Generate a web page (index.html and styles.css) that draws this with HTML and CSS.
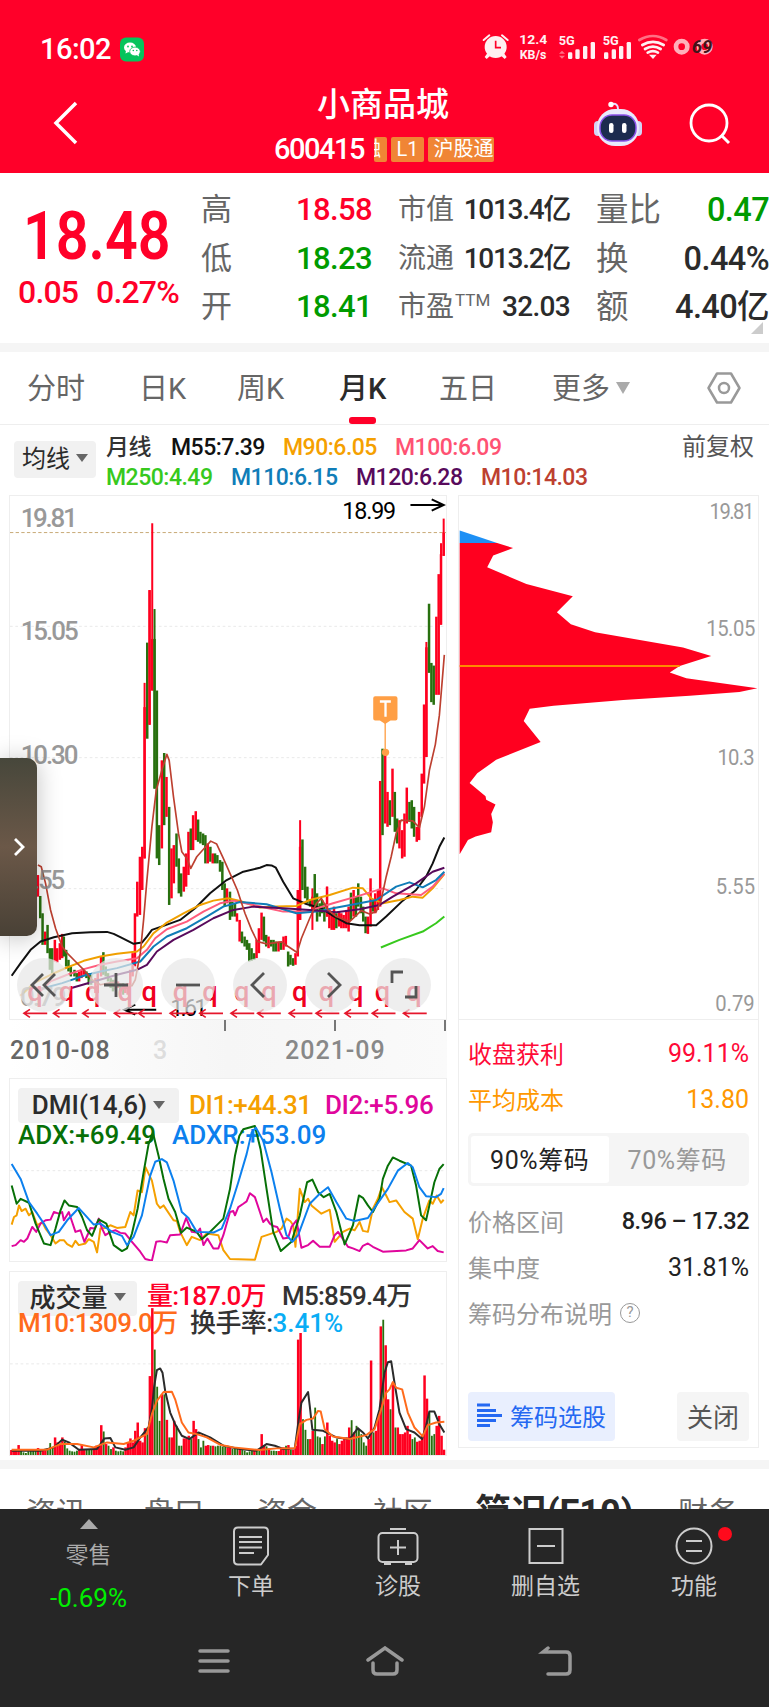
FILE: index.html
```html
<!DOCTYPE html>
<html lang="zh-CN">
<head>
  <meta charset="UTF-8">
  <title>小商品城 600415</title>
  <link rel="stylesheet" href="styles.css">
</head>
<body>
  <header class="header">
    <div class="status-bar">
      <span class="clock">16:02</span>
      <svg class="wechat" viewBox="0 0 24 24">
        <rect width="24" height="24" rx="6" fill="#05c45c"/>
        <ellipse cx="10" cy="10" rx="6" ry="5" fill="#fff"/>
        <path d="M6 13l-.5 3 3-1.500z" fill="#fff"/>
        <ellipse cx="15" cy="14" rx="5.300" ry="4.400" fill="#fff" stroke="#05c45c" stroke-width=".8"/>
        <path d="M16 17l3 2-.5-3z" fill="#fff"/>
        <g fill="#05c45c"><circle cx="8" cy="9" r=".9"/><circle cx="12" cy="9" r=".9"/><circle cx="13.300" cy="13" r=".8"/><circle cx="16.800" cy="13" r=".8"/></g>
      </svg>
      <svg class="status-icons" viewBox="0 0 780 150">
        <g fill="#fff0f2">
          <circle cx="77" cy="69" r="33"/>
          <path d="M52 88l8 8-10 9-6-6zM102 88l-8 8 10 9 6-6z"/>
          <path d="M41 48l17-14M113 48L96 34" stroke="#fff0f2" stroke-width="6" stroke-linecap="round"/>
        </g>
        <path d="M77 50v21h16" fill="none" stroke="#ff0029" stroke-width="5"/>
        <g class="status-text">
          <text x="148" y="59" textLength="84" lengthAdjust="spacingAndGlyphs" font-size="41">12.4</text>
          <text x="149" y="105" textLength="80" lengthAdjust="spacingAndGlyphs" font-size="38">KB/s</text>
          <text x="266" y="62" textLength="48" lengthAdjust="spacingAndGlyphs" font-size="40">5G</text>
          <text x="398" y="62" textLength="48" lengthAdjust="spacingAndGlyphs" font-size="40">5G</text>
        </g>
        <g fill="#fff0f2">
          <rect x="294" y="85" width="13" height="20" rx="4"/><rect x="316" y="76" width="13" height="29" rx="4"/><rect x="339" y="66" width="13" height="39" rx="4"/><rect x="362" y="54" width="13" height="51" rx="4"/>
          <rect x="402" y="85" width="13" height="20" rx="4"/><rect x="425" y="76" width="13" height="29" rx="4"/><rect x="447" y="66" width="13" height="39" rx="4"/><rect x="470" y="54" width="13" height="51" rx="4"/>
          <path d="M537 92h23l-11 13z"/>
        </g>
        <path d="M267 89l9-9 9 9zM267 95l9 9 9-9z" fill="#ff6f84"/>
        <g fill="none" stroke="#fff0f2" stroke-width="8" stroke-linecap="round">
          <path d="M508 48q41-24 81 0" stroke="#ff6f84"/>
          <path d="M517 63q32-19 64 0M525 75q24-14 47 0M533 86q16-9 31 0"/>
        </g>
        <circle cx="635" cy="68" r="17" fill="none" stroke="#ffb0ba" stroke-width="14"/>
        <circle cx="704" cy="68" r="17" fill="none" stroke="#ffb0ba" stroke-width="14"/>
        <text class="battery" x="665" y="88" font-size="54" textLength="62" lengthAdjust="spacingAndGlyphs">69</text>
      </svg>
    </div>

    <div class="title-bar">
      <svg class="back" viewBox="0 0 26 44"><path d="M23 2L3 22l20 20" fill="none" stroke="#fff" stroke-width="3.500"/></svg>
      <div class="title">
        <h1>小商品城</h1>
        <div class="subtitle">
          <span class="code">600415</span>
          <span class="tag tag-cut"><span>融</span></span>
          <span class="tag tag-level">L1</span>
          <span class="tag tag-market">沪股通</span>
        </div>
      </div>
      <svg class="robot" viewBox="0 0 50 46">
        <path d="M25 8q0-6-6-5" fill="none" stroke="#ead9ff" stroke-width="2"/>
        <circle cx="18" cy="3.500" r="2.700" fill="#fff"/>
        <rect x="1" y="20" width="8" height="15" rx="4" fill="#d2d4f5"/><rect x="41" y="20" width="8" height="15" rx="4" fill="#d2d4f5"/>
        <rect x="4" y="8" width="42" height="37" rx="18" fill="#e9e9fb"/>
        <rect x="7" y="14" width="36" height="26" rx="12" fill="#1c2b4e" stroke="#8a52e8" stroke-width="1.500"/>
        <rect x="16" y="22" width="4.500" height="10" rx="2.200" fill="#fff"/><rect x="29" y="22" width="4.500" height="10" rx="2.200" fill="#fff"/>
      </svg>
      <svg class="search" viewBox="0 0 42 42"><circle cx="20" cy="20" r="18" fill="none" stroke="#fff" stroke-width="2.800"/><path d="M32 32l8 8" stroke="#fff" stroke-width="3"/></svg>
    </div>
  </header>

  <section class="quote">
    <div class="price">
      <strong>18.48</strong>
      <div class="change"><span>0.05</span><span>0.27%</span></div>
    </div>
    <dl class="facts facts-day">
      <div><dt>高</dt><dd class="up">18.58</dd></div>
      <div><dt>低</dt><dd class="down">18.23</dd></div>
      <div><dt>开</dt><dd class="down">18.41</dd></div>
    </dl>
    <dl class="facts facts-cap">
      <div><dt>市值</dt><dd>1013.4亿</dd></div>
      <div><dt>流通</dt><dd>1013.2亿</dd></div>
      <div><dt>市盈<sup>TTM</sup></dt><dd class="pe">32.03</dd></div>
    </dl>
    <dl class="facts facts-vol">
      <div><dt>量比</dt><dd class="down">0.47</dd></div>
      <div><dt>换</dt><dd>0.44%</dd></div>
      <div><dt>额</dt><dd>4.40亿</dd></div>
    </dl>
    <i class="corner"></i>
  </section>

  <nav class="periods">
    <a>分时</a>
    <a>日K</a>
    <a>周K</a>
    <a class="active">月K</a>
    <a>五日</a>
    <a>更多<i class="caret"></i></a>
    <svg class="settings" viewBox="0 0 34 32"><path d="M10 1.500h14L32.500 16 24 30.500H10L1.500 16z" fill="none" stroke="#999" stroke-width="2.500" stroke-linejoin="round"/><circle cx="17" cy="16" r="5" fill="none" stroke="#999" stroke-width="2.500"/></svg>
  </nav>

  <div class="ma-legend">
    <button class="picker">均线<i class="caret"></i></button>
    <div class="ma-values">
      <div class="ma-row ma-row-top">
        <span class="c-text">月线</span><span class="c-m55">M55:7.39</span><span class="c-m90">M90:6.05</span><span class="c-m100">M100:6.09</span>
      </div>
      <div class="ma-row ma-row-bottom">
        <span class="c-m250">M250:4.49</span><span class="c-m110">M110:6.15</span><span class="c-m120">M120:6.28</span><span class="c-m10">M10:14.03</span>
      </div>
    </div>
    <span class="adjust">前复权</span>
  </div>

  <main class="board">
    <div class="charts">
      <div class="kline">
        <svg viewBox="28 -735 1312 1573" preserveAspectRatio="none">
          <g fill="none" stroke="#e9e9e9" stroke-width="3" stroke-dasharray="8 8"><path d="M28-343H1340M28 52H1340M28 446H1340"/></g>
          <path d="M28-625H1340" stroke="#c8aa76" stroke-width="3" stroke-dasharray="10 7"/>
          <g id="candles"></g>
          <g class="lines">
            <polyline class="s-m55" points="33,708 60,670 90,630 120,605 160,592 215,580 270,577 320,576 340,582 360,592 400,612 425,608 440,590 455,570 490,558 540,540 585,505 630,460 680,420 730,395 780,383 800,375 815,376 828,383 850,425 880,475 920,492 965,505 1000,528 1040,550 1080,556 1130,556 1160,530 1210,482 1250,450 1280,410 1300,370 1320,320 1335,292"/>
            <polyline class="s-m90" points="60,768 100,730 150,705 200,683 250,663 300,650 350,642 410,635 430,620 460,580 500,548 550,520 600,495 640,482 685,475 720,483 780,503 830,500 890,498 930,480 990,465 1060,443 1090,445 1115,475 1150,490 1200,480 1240,470 1270,473 1300,445 1335,402"/>
            <polyline class="s-m100" points="115,758 150,725 200,705 250,688 300,675 350,665 410,655 440,630 465,595 500,568 560,545 610,515 660,490 700,482 760,495 850,515 920,515 1000,490 1070,470 1150,445 1190,460 1265,465 1300,440 1335,400"/>
            <polyline class="s-m110" points="130,745 185,730 250,708 300,695 350,685 420,665 460,620 500,590 560,565 620,530 670,500 720,486 800,493 890,520 950,515 1000,505 1080,490 1130,480 1190,440 1230,427 1270,442 1310,420 1335,395"/>
            <polyline class="s-m120" points="213,745 270,728 350,705 410,690 440,675 470,635 520,600 580,570 640,535 700,510 760,500 850,505 930,510 1010,517 1080,508 1140,495 1180,470 1250,430 1300,395 1335,383"/>
            <polyline class="s-m250" points="1144,623 1200,600 1270,575 1310,550 1335,530"/>
            <polyline class="s-m10" points="112,375 122,380 135,430 150,510 165,565 185,620 200,640 225,665 250,690 275,720 300,735 335,728 370,735 395,738 405,720 420,640 430,540 440,420 455,260 468,150 485,90 500,42 507,60 520,170 535,280 545,335 560,355 572,385 590,350 612,325 632,303 650,312 670,355 690,400 712,450 735,520 755,570 772,605 800,612 845,606 865,620 892,638 905,595 930,535 950,490 965,475 985,510 1010,530 1050,545 1085,512 1110,522 1130,515 1145,480 1160,410 1175,350 1190,280 1205,240 1240,242 1260,262 1275,200 1290,90 1308,12 1320,-75 1335,-257"/>
          </g>
          <g class="axis">
            <text x="60" y="-643" textLength="172">19.81</text>
            <text x="60" y="-303" textLength="175">15.05</text>
            <text x="60" y="70" textLength="174">10.30</text>
            <text x="60" y="446" textLength="134">5.55</text>
            <text x="58" y="800" textLength="140">0.79</text>
          </g>
          <g class="mark">
            <text x="1028" y="-665" textLength="162">18.99</text>
            <path d="M1233-708H1333M1297-725l36 17-36 17"/>
            <text x="510" y="830" textLength="112">1.61</text>
            <path d="M468 810H372M405 795l-33 15 33 15"/>
          </g>
          <g fill="#ff9f45">
            <path d="M1157-60V30" stroke="#ff9f45" stroke-width="4"/>
            <circle cx="1158" cy="36" r="11"/>
            <path d="M1127-133h61q6 0 6 6v61q0 6-6 6h-15l-16 11-16-11h-14q-6 0-6-6v-61q0-6 6-6z"/>
          </g>
          <path d="M1141-117h33M1158-117v46" stroke="#fff" stroke-width="7"/>
          <g id="signals" class="signals"></g>
        </svg>
        <div class="tools">
          <button><svg viewBox="0 0 54 54"><path d="M26 16L15 27l11 11M38 16L27 27l11 11"/></svg></button>
          <button><svg viewBox="0 0 54 54"><path d="M15 27h24M27 15v24"/></svg></button>
          <button><svg viewBox="0 0 54 54"><path d="M15 27h24"/></svg></button>
          <button><svg viewBox="0 0 54 54"><path d="M31 15L19 27l12 12"/></svg></button>
          <button><svg viewBox="0 0 54 54"><path d="M23 15l12 12-12 12"/></svg></button>
          <button><svg viewBox="0 0 54 54"><path d="M15 25V14h11M39 28v11H28"/></svg></button>
        </div>
      </div>

      <div class="dates">
        <div class="ticks"><i></i><i></i><i></i></div>
        <div class="date-row"><span>2010-08</span><span class="faded">3</span><span class="mid">2021-09</span></div>
      </div>

      <div class="indicator dmi">
        <div class="ind-row">
          <button class="picker">DMI(14,6)<i class="caret"></i></button>
          <span class="c-di1">DI1:+44.31</span><span class="c-di2">DI2:+5.96</span>
        </div>
        <div class="ind-row second"><span class="c-adx">ADX:+69.49</span><span class="c-adxr">ADXR:+53.09</span></div>
        <svg class="overlay" viewBox="28 38 1312 550" preserveAspectRatio="none">
          <path d="M28 315H1340" stroke="#e9e9e9" stroke-width="3" stroke-dasharray="8 8"/>
          <g class="lines">
            <polyline class="s-di1" points="33,478 40,455 48,450 55,420 63,437 75,430 85,450 95,440 110,480 125,470 135,490 150,510 165,535 178,525 190,525 200,537 215,545 225,527 235,540 255,535 265,522 280,530 290,562 300,490 315,488 330,480 350,488 375,485 390,440 400,450 412,375 425,380 436,305 455,345 470,415 480,428 490,420 520,465 530,467 540,500 560,540 575,515 600,525 620,505 655,510 670,555 690,582 765,584 785,515 830,500 845,490 860,460 872,468 880,480 887,545 900,370 915,410 925,400 935,420 965,445 990,433 1005,530 1020,512 1030,500 1050,490 1065,495 1080,470 1090,497 1105,500 1120,430 1135,400 1147,365 1160,390 1170,410 1190,405 1215,440 1240,460 1255,522 1270,460 1290,405 1300,415 1312,390 1325,412 1333,403"/>
            <polyline class="s-di2" points="33,543 45,540 60,525 70,530 80,520 95,485 107,500 120,475 135,465 150,463 160,440 175,445 185,440 190,465 205,440 215,470 225,500 240,495 252,530 262,508 270,488 283,490 295,460 305,490 315,510 330,500 345,495 360,503 375,505 395,530 420,560 435,582 455,587 468,530 480,528 500,532 510,510 540,508 550,480 558,458 575,500 590,502 600,490 610,540 622,520 640,550 655,550 670,510 690,440 700,437 705,450 715,425 730,415 740,408 750,383 765,395 780,440 790,470 800,460 810,475 820,482 832,485 850,520 865,518 875,485 890,465 905,548 925,540 940,527 960,545 990,545 1005,510 1015,500 1030,522 1045,545 1060,550 1080,558 1090,542 1105,535 1120,545 1150,560 1220,556 1240,550 1260,525 1285,550 1300,543 1315,558 1333,562"/>
            <polyline class="s-adx" points="33,360 48,415 60,400 85,412 105,475 130,535 150,540 165,490 180,435 192,405 205,420 230,425 245,455 260,495 275,512 295,462 318,475 340,540 365,558 380,550 395,505 412,430 430,320 445,235 458,200 475,270 490,340 505,400 525,440 543,503 560,487 590,500 605,522 625,505 655,475 670,460 690,370 705,270 718,210 730,190 765,180 782,250 800,370 820,500 843,558 875,530 900,450 922,350 938,342 955,380 972,395 990,385 1010,440 1035,538 1060,480 1078,390 1090,397 1105,420 1120,440 1140,400 1150,340 1165,300 1180,275 1200,285 1235,300 1250,360 1265,450 1280,465 1290,420 1305,350 1320,310 1333,295"/>
            <polyline class="s-adxr" points="33,295 60,340 85,410 110,445 130,475 150,510 175,500 200,465 235,428 255,450 280,478 300,475 335,500 365,512 380,540 400,515 425,450 450,330 465,288 485,280 500,290 520,345 545,440 565,458 590,500 640,502 665,490 690,430 715,350 740,265 755,200 768,185 790,225 815,320 840,430 860,510 878,530 895,510 930,415 960,385 985,365 1010,410 1040,460 1065,467 1105,458 1130,420 1165,370 1195,315 1225,292 1240,305 1260,365 1280,392 1310,395 1325,385 1333,368"/>
          </g>
        </svg>
      </div>

      <div class="indicator volume">
        <div class="ind-row">
          <button class="picker">成交量<i class="caret"></i></button>
          <span class="c-up">量:187.0万</span><span class="c-text">M5:859.4万</span>
        </div>
        <div class="ind-row second"><span class="c-v10">M10:1309.0万</span><span class="c-text">换手率:<b>3.41%</b></span></div>
        <svg class="overlay" viewBox="28 16 1312 552" preserveAspectRatio="none">
          <path d="M28 293H1340" stroke="#e9e9e9" stroke-width="3" stroke-dasharray="8 8"/>
          <g id="bars"></g>
          <g class="lines">
            <polyline class="s-v5" points="33,555 120,555 160,545 185,522 205,530 235,552 290,550 312,518 330,517 345,545 375,552 400,545 420,515 445,485 455,430 462,360 470,312 480,307 487,320 495,375 510,440 525,475 545,510 568,520 595,500 630,515 670,540 720,550 770,555 800,535 825,540 850,550 885,548 897,460 905,410 925,378 930,420 938,492 970,495 1010,515 1050,520 1075,487 1090,500 1105,518 1125,485 1140,430 1155,320 1165,288 1175,285 1185,350 1200,440 1220,490 1245,500 1268,520 1280,480 1290,437 1305,437 1320,475 1335,500"/>
            <polyline class="s-v10" points="33,552 140,552 180,535 230,535 280,545 320,530 370,535 400,525 440,505 455,445 470,405 490,378 515,377 525,400 545,470 565,500 590,505 620,515 660,537 700,545 780,553 830,548 885,548 900,475 920,462 940,458 955,435 963,437 975,490 1000,512 1050,520 1100,508 1125,490 1145,430 1160,380 1170,370 1180,348 1190,365 1208,370 1225,440 1245,485 1270,512 1285,478 1310,470 1335,468"/>
          </g>
        </svg>
      </div>
    </div>

    <aside class="chips">
      <svg class="chips-chart" viewBox="25 40 901 1467" preserveAspectRatio="none">
        <path d="M27 137L140 172H27z" fill="#1e90f5"/>
        <path d="M27 172H140L188 186 128 207 110 240 228 287 368 321 320 366 362 400 435 422 700 465 785 489 690 517 660 535 710 551 924 579 870 590 720 600 520 612 310 628 238 637 220 671 271 730 137 780 80 818 57 845 105 882 107 892 135 905 122 932 127 955 122 983 75 995 52 1005 27 1045z" fill="#ff001f"/>
        <path d="M27 517H690" stroke="#ff8a00" stroke-width="6"/>
        <g class="chips-axis">
          <text x="780" y="104" textLength="135">19.81</text>
          <text x="770" y="433" textLength="148">15.05</text>
          <text x="804" y="795" textLength="112">10.3</text>
          <text x="799" y="1157" textLength="118">5.55</text>
          <text x="797" y="1484" textLength="119">0.79</text>
        </g>
      </svg>
      <div class="chips-body">
        <div class="stat c-profit"><span>收盘获利</span><b>99.11%</b></div>
        <div class="stat c-cost"><span>平均成本</span><b>13.80</b></div>
        <div class="toggle"><button class="on">90%筹码</button><button>70%筹码</button></div>
        <div class="stat"><span>价格区间</span><b class="narrow">8.96 – 17.32</b></div>
        <div class="stat"><span>集中度</span><b>31.81%</b></div>
        <div class="stat"><span>筹码分布说明<i class="help">?</i></span></div>
        <div class="actions">
          <button class="pick"><svg viewBox="0 0 25 25"><path d="M0 2h13M0 7.500h19M0 12.500h25M0 17.500h19M0 22.500h13" stroke="#2468f2" stroke-width="3"/></svg>筹码选股</button>
          <button class="close">关闭</button>
        </div>
      </div>
    </aside>
  </main>

  <nav class="info-tabs">
    <a>资讯</a><a>盘口</a><a>资金</a><a>社区</a><a class="active">简况(F10)</a><a>财务</a>
  </nav>

  <footer class="footer">
    <div class="actions-bar">
      <div class="sector"><i></i><span>零售</span><em>-0.69%</em></div>
      <div class="action">
        <svg viewBox="0 0 42 40"><path d="M8 1.500h26q4 0 4 4V29l-7 9.500H8q-4 0-4-4v-29q0-4 4-4z" stroke-linejoin="round"/><path d="M9 11h23M9 16h23M9 21.500h23M9 27h15"/></svg>
        <span>下单</span>
      </div>
      <div class="action">
        <svg viewBox="0 0 42 40"><rect x="1.500" y="7" width="39" height="29" rx="4"/><path d="M13 3h16M21 14v15M13 21.500h16M7 38h7M28 38h7"/></svg>
        <span>诊股</span>
      </div>
      <div class="action">
        <svg viewBox="0 0 42 40"><rect x="4.500" y="3" width="33" height="34"/><path d="M12 20h18"/></svg>
        <span>删自选</span>
      </div>
      <div class="action">
        <svg viewBox="0 0 42 40"><circle cx="21" cy="20" r="17.500"/><path d="M13 15h16M13 25h16"/></svg>
        <span>功能</span>
        <i class="dot"></i>
      </div>
    </div>
    <div class="system-nav">
      <svg viewBox="0 0 40 30"><path d="M6 5h28M6 15h28M6 25h28"/></svg>
      <svg viewBox="0 0 40 30"><path d="M3 14L20 2l17 12M8 17v7q0 4 4 4h16q4 0 4-4v-7"/></svg>
      <svg viewBox="0 0 40 30"><path d="M12 2L7 6h23q4 0 4 4v14q0 4-4 4H12"/></svg>
    </div>
  </footer>

  <div class="drawer"><svg viewBox="0 0 12 20"><path d="M2 2l8 8-8 8" fill="none" stroke="#fff" stroke-width="2.800"/></svg></div>

  <script src="chart.js"></script>
</body>
</html>
```
FILE: styles.css
```css
* {
  box-sizing: border-box;
}

body {
  margin: 0;
  width: 769px;
  height: 1707px;
  overflow: hidden;
  position: relative;
  background-color: #fff;
  color: #2b2b2b;
  font-family: Roboto, "Noto Sans CJK SC", sans-serif;
}

button {
  border: none;
  padding: 0;
  font-family: inherit;
  color: inherit;
}

svg {
  display: block;
}

/* header */
.header {
  height: 173px;
  background-color: #ff0029;
  color: #fff;
}

.status-bar {
  display: flex;
  align-items: center;
  height: 75px;
  padding: 23px 39px 0 40px;
}

.clock {
  width: 80px;
  font-size: 29px;
  font-weight: 500;
  line-height: 48px;
  letter-spacing: -0.5px;
}

.wechat {
  width: 24px;
  height: 25px;
}

.status-icons {
  width: 260px;
  height: 50px;
  margin-left: auto;
}

.status-text {
  fill: #fff0f2;
  font-weight: 700;
}

.battery {
  fill: #40141a;
  font-weight: 700;
  font-style: italic;
}

.title-bar {
  display: flex;
  height: 98px;
  padding-left: 53px;
}

.back {
  width: 26px;
  height: 44px;
  margin-top: 26px;
}

.title {
  width: 230px;
  margin-left: 195px;
}

.title h1 {
  margin: 7px 0 0;
  padding-left: 43px;
  font-size: 33px;
  font-weight: 500;
  line-height: 46px;
}

.subtitle {
  display: flex;
  align-items: center;
  height: 42px;
}

.code {
  width: 100px;
  font-size: 29px;
  font-weight: 500;
  letter-spacing: -1.5px;
}

.tag {
  height: 25px;
  margin-right: 4px;
  border-radius: 2px;
  background-color: #f08535;
  font-size: 20px;
  line-height: 25px;
  text-align: center;
  white-space: nowrap;
}

.tag-cut {
  display: flex;
  justify-content: flex-end;
  width: 13px;
  padding-right: 6px;
  overflow: hidden;
}

.tag-level {
  width: 33px;
}

.tag-market {
  width: 66px;
  margin-right: 0;
  padding-left: 5px;
  overflow: hidden;
}

.robot {
  width: 50px;
  height: 46px;
  margin: 26px 0 0 89px;
}

.search {
  width: 42px;
  height: 42px;
  margin: 28px 0 0 46px;
}

/* quote */
.quote {
  position: relative;
  display: flex;
  height: 179px;
  padding-top: 13px;
  border-bottom: 9px solid #f5f5f5;
}

.price {
  width: 201px;
  color: #ff0029;
}

.price strong {
  display: block;
  width: 164px;
  margin: 11px 0 0 23px;
  font-size: 66px;
  font-weight: 600;
  line-height: 80px;
  transform: scaleX(0.87);
  transform-origin: left;
}

.change {
  display: flex;
  padding-left: 18px;
  font-size: 32px;
  font-weight: 500;
  line-height: 30px;
  letter-spacing: -0.8px;
}

.change span:first-child {
  width: 78px;
}

.facts {
  margin: 0;
  white-space: nowrap;
}

.facts div {
  display: flex;
  justify-content: space-between;
  height: 48.500px;
  line-height: 48px;
}

.facts dt {
  color: #666;
  font-size: 31px;
}

.facts dd {
  margin: 0;
  font-size: 31px;
  font-weight: 500;
  letter-spacing: -0.6px;
}

.facts dd.up {
  color: #ff0029;
}

.facts dd.down {
  color: #009b00;
}

.facts-day {
  width: 171px;
}

.facts-cap {
  width: 172px;
  margin-left: 26px;
}

.facts-cap dt,
.facts-cap dd {
  font-size: 28px;
}

.facts-cap dd {
  letter-spacing: -1.3px;
}

.facts-cap .pe {
  letter-spacing: -0.7px;
}

.facts-cap sup {
  margin-left: 1px;
  font-size: 17px;
  line-height: 0;
}

.facts-vol {
  width: 173px;
  margin-left: 26px;
}

.facts-vol dt,
.facts-vol dd {
  font-size: 32.5px;
}

.corner {
  position: absolute;
  right: 6px;
  bottom: 9px;
  border: 6px solid transparent;
  border-right-color: #ccc;
  border-bottom-color: #ccc;
}

/* periods */
.periods {
  display: grid;
  grid-template-columns: 112px 98px 102px 100px 113px 155px 34px;
  align-items: center;
  height: 73px;
  padding-left: 27px;
  border-bottom: 1px solid #eee;
  color: #666;
  font-size: 29px;
}

.periods a {
  position: relative;
  padding-top: 2px;
  line-height: 70px;
}

.periods .active {
  color: #2b2b2b;
  font-weight: 500;
}

.periods .active::after {
  content: "";
  position: absolute;
  left: 10px;
  bottom: 0;
  width: 27px;
  height: 7px;
  border-radius: 3px;
  background-color: #ff0029;
}

.caret {
  display: inline-block;
  margin-left: 6px;
  border: 6px solid transparent;
  border-top: 8px solid #666;
  border-bottom: none;
  vertical-align: middle;
  margin-bottom: 5px;
}

.periods .caret {
  border-width: 12px 7px 0;
  border-top-color: #aaa;
  margin-bottom: 6px;
}

.settings {
  width: 34px;
  height: 32px;
}

/* moving averages */
.picker {
  flex: none;
  border-radius: 4px;
  background-color: #f1f1f1;
  text-align: center;
  white-space: nowrap;
}

.ma-legend {
  display: flex;
  height: 70px;
  padding: 7px 14px 0;
  font-size: 23px;
  font-weight: 500;
}

.ma-legend .picker {
  width: 82px;
  height: 37px;
  margin-top: 9px;
  font-size: 24px;
  line-height: 35px;
}

.ma-values {
  width: 586px;
  padding-left: 10px;
}

.ma-row {
  display: grid;
  line-height: 31px;
  height: 30px;
  letter-spacing: -0.5px;
}

.ma-row-top {
  grid-template-columns: 65px 112px 112px 120px;
}

.ma-row-bottom {
  grid-template-columns: 125px 125px 125px 120px;
}

.adjust {
  color: #555;
  font-size: 24px;
  font-weight: 400;
  line-height: 30px;
  white-space: nowrap;
}

.c-text { color: #333; }
.c-m55 { color: #111; }
.c-m90 { color: #f5a000; }
.c-m100 { color: #ff5273; }
.c-m250 { color: #37c91d; }
.c-m110 { color: #107db8; }
.c-m120 { color: #580a5c; }
.c-m10 { color: #bd4030; }
.c-di1 { color: #f5a000; }
.c-di2 { color: #e0069c; }
.c-adx { color: #077007; }
.c-adxr { color: #0c80ee; }
.c-up { color: #ff0029; }
.c-v10 { color: #ff6b1c; }

/* charts */
.board {
  display: flex;
  height: 965px;
  padding-left: 9px;
}

.charts {
  width: 438px;
}

.kline {
  position: relative;
  height: 525px;
  border: 1px solid #eee;
}

.kline > svg {
  width: 436px;
  height: 523px;
}

.lines polyline {
  fill: none;
  stroke-width: 6;
  stroke-linejoin: round;
}

.s-m55 { stroke: #111; }
.s-m90 { stroke: #f0a000; }
.s-m100 { stroke: #ff5c7c; }
.s-m110 { stroke: #107db8; }
.s-m120 { stroke: #580a5c; }
.s-m250 { stroke: #37c91d; }
.lines .s-m10 { stroke: #bd4030; stroke-width: 5; }
.s-di1 { stroke: #f5a000; }
.s-di2 { stroke: #e0069c; }
.s-adx { stroke: #077007; }
.s-adxr { stroke: #0c80ee; }
.s-v5 { stroke: #2b2b2b; }
.s-v10 { stroke: #ff6b1c; }

.axis {
  fill: #888;
  font-size: 78px;
  font-weight: 500;
  opacity: 0.85;
}

.mark {
  font-size: 70px;
}

.mark path {
  fill: none;
  stroke: #000;
  stroke-width: 6;
}

.signals {
  fill: #f00020;
  font-size: 82px;
  font-weight: 500;
  text-anchor: middle;
}

.signals path {
  fill: none;
  stroke: #e5172c;
  stroke-width: 5;
}

.tools {
  position: absolute;
  left: 7px;
  bottom: 7px;
  display: flex;
  gap: 18px;
}

.tools button {
  width: 54px;
  height: 54px;
  border-radius: 50%;
  background-color: rgba(232, 232, 232, 0.72);
}

.tools path {
  fill: none;
  stroke: #555;
  stroke-width: 2.8;
}

.dates {
  height: 58px;
  background: linear-gradient(to right, #fff, #f6f6f6 50%, #fafafa);
}

.ticks {
  display: flex;
  justify-content: flex-end;
  gap: 108px;
  height: 11px;
  padding-right: 1px;
}

.ticks i {
  width: 2px;
  background-color: #777;
}

.date-row {
  display: flex;
  padding-left: 1px;
  color: #666;
  font-size: 25px;
  font-weight: 500;
  line-height: 40px;
  letter-spacing: 1px;
}

.date-row span {
  width: 143px;
}

.date-row .faded {
  width: 132px;
  color: #ddd;
}

.date-row .mid {
  color: #888;
}

.indicator {
  position: relative;
  border: 1px solid #eee;
  font-size: 26px;
  font-weight: 500;
  white-space: nowrap;
}

.ind-row {
  display: flex;
  align-items: center;
  padding-left: 8px;
  height: 34px;
  letter-spacing: -0.4px;
}

.ind-row.second {
  height: 26px;
}

.indicator .picker {
  height: 35px;
  font-size: 26px;
  font-weight: 500;
  line-height: 34px;
}

.overlay {
  position: absolute;
  left: 0;
  top: 0;
  width: 436px;
  height: 100%;
}

.dmi {
  height: 184px;
  padding-top: 9px;
}

.dmi .picker {
  width: 161px;
  margin-right: 10px;
}

.dmi .c-di1 {
  width: 136px;
}

.dmi .second {
  letter-spacing: 0;
}

.dmi .c-adx {
  width: 154px;
}

.volume {
  height: 185px;
  margin-top: 9px;
  padding-top: 9px;
}

.volume .ind-row {
  line-height: 30px;
  letter-spacing: -0.8px;
}

.volume .ind-row span {
  height: 34px;
}

.volume .second {
  margin-top: -3px;
  letter-spacing: -0.6px;
}

.volume .picker {
  width: 119px;
  margin-right: 10px;
  line-height: 31px;
}

.volume .c-up {
  width: 135px;
}

.volume .c-v10 {
  width: 172px;
}

.volume b {
  color: #09adf5;
  font-weight: 500;
  letter-spacing: 0;
}

/* chip distribution */
.chips {
  width: 301px;
  height: 953px;
  margin-left: 11px;
  border: 1px solid #eee;
}

.chips-chart {
  width: 299px;
  height: 524px;
  border-bottom: 1px solid #eee;
}

.chips-axis {
  fill: #999;
  font-size: 61px;
}

.chips-body {
  padding: 10px 9px 0;
}

.stat {
  display: flex;
  align-items: center;
  justify-content: space-between;
  height: 46px;
  color: #999;
  font-size: 24px;
}

.stat span {
  display: flex;
  align-items: center;
  margin-top: -2px;
}

.stat b {
  color: #222;
  font-size: 25px;
  font-weight: 400;
}

.stat .narrow {
  font-size: 23.5px;
  font-weight: 500;
  letter-spacing: -0.5px;
}

.stat.c-profit,
.stat.c-profit b {
  color: #ff0a37;
}

.stat.c-cost,
.stat.c-cost b {
  color: #ff9800;
}

.help {
  width: 20px;
  height: 20px;
  margin: 1px 0 0 8px;
  border: 1.5px solid #999;
  border-radius: 50%;
  font-size: 15px;
  font-style: normal;
  line-height: 17px;
  text-align: center;
}

.toggle {
  display: flex;
  height: 53px;
  margin: 11px 0 12px;
  padding: 3px;
  border-radius: 5px;
  background-color: #f5f5f5;
}

.toggle button {
  flex: 1;
  padding-bottom: 3px;
  border-radius: 3px;
  background-color: transparent;
  color: #999;
  font-size: 25px;
  letter-spacing: 0.6px;
}

.toggle .on {
  background-color: #fff;
  color: #222;
}

.actions {
  display: flex;
  justify-content: space-between;
  margin-top: 56px;
}

.actions button {
  height: 49px;
  border-radius: 4px;
  padding-bottom: 3px;
}

.pick {
  display: flex;
  align-items: center;
  gap: 8px;
  width: 147px;
  padding-left: 9px;
  background-color: #e9effe;
  color: #2468f2;
  font-size: 24px;
}

.pick svg {
  width: 25px;
  height: 25px;
}

.close {
  width: 72px;
  background-color: #f5f5f5;
  color: #555;
  font-size: 26px;
}

/* lower tabs, partly hidden by the footer */
.info-tabs {
  display: grid;
  grid-template-columns: 118px 113px 116px 102px 203px 80px;
  height: 49px;
  padding: 22px 0 0 26px;
  border-top: 9px solid #f5f5f5;
  overflow: hidden;
  color: #666;
  font-size: 30px;
  line-height: 44px;
  white-space: nowrap;
}

.info-tabs .active {
  color: #2b2b2b;
  font-size: 36px;
  font-weight: 700;
}

/* footer */
.footer {
  height: 198px;
  background-color: #262626;
  color: #ccc;
}

.actions-bar {
  display: grid;
  grid-template-columns: 177px 148px 146px 149px 148px;
  height: 120px;
  font-size: 23px;
}

.sector {
  display: flex;
  flex-direction: column;
  align-items: center;
  padding-top: 10px;
}

.sector i {
  border: 9px solid transparent;
  border-top: none;
  border-bottom: 10px solid #aaa;
}

.sector span {
  margin-top: 10px;
  line-height: 34px;
  color: #aaa;
}

.sector em {
  margin-top: 8px;
  color: #0e0;
  font-size: 26px;
  font-style: normal;
  line-height: 34px;
}

.action {
  position: relative;
  display: flex;
  flex-direction: column;
  align-items: center;
  padding-top: 17px;
}

.action svg {
  width: 42px;
  height: 40px;
  fill: none;
  stroke: #ccc;
  stroke-width: 2;
}

.action span {
  margin-top: 4px;
  line-height: 34px;
}

.dot {
  position: absolute;
  left: 98px;
  top: 18px;
  width: 14px;
  height: 14px;
  border-radius: 50%;
  background-color: #ff0a1c;
}

.system-nav {
  display: flex;
  justify-content: center;
  gap: 131px;
  padding-top: 17px;
}

.system-nav svg {
  width: 40px;
  height: 30px;
  fill: none;
  stroke: #999;
  stroke-width: 3.5;
  stroke-linecap: round;
}

/* side drawer handle */
.drawer {
  position: absolute;
  left: 0;
  top: 758px;
  display: flex;
  align-items: center;
  justify-content: flex-end;
  width: 37px;
  height: 178px;
  padding-right: 12px;
  border-radius: 0 10px 10px 0;
  background: linear-gradient(#47473b, #6b5848 50%, #494136);
  box-shadow: 0 2px 24px rgba(0, 0, 0, 0.25);
}

.drawer svg {
  width: 12px;
  height: 20px;
}
```
FILE: chart.js
```js
const RED = '#ff001f';
const GREEN = '#28700f';

// x, high, low, direction
const candles = `112 405 470 r,119 468 535 g,126 520 615 g,134 575 615 r,141 555 640 g,148 625 690 g,155 625 700 g,163 600 665 r,
170 625 668 r,178 610 660 r,185 582 655 r,190 590 650 g,197 630 680 g,204 660 695 g,211 680 710 g,222 690 710 g,229 700 725 g,
236 695 725 r,243 690 715 r,251 690 705 r,258 695 715 g,265 700 735 g,272 705 735 g,285 715 760 r,292 700 760 r,302 650 710 r,
309 637 705 g,316 680 710 g,323 700 725 g,331 715 745 g,338 720 755 g,346 720 750 r,353 725 745 r,360 735 755 g,368 730 765 g,
375 740 760 r,382 730 765 r,390 690 740 r,397 640 710 r,404 520 680 r,411 425 530 r,419 350 525 r,426 320 450 r,433 -100 355 r,
441 -294 -5 g,448 -452 -47 r,456 -305 -150 r,463 -305 145 g,470 -150 355 g,477 255 375 g,485 60 325 r,492 38 255 g,499 110 230 r,
507 200 495 g,514 325 475 r,521 315 430 r,529 280 380 g,536 355 460 g,543 400 470 g,551 380 455 r,558 340 440 r,565 275 405 r,
572 265 330 g,579 225 330 r,587 213 300 r,594 238 305 g,601 275 310 g,609 280 315 g,616 285 370 g,623 310 370 r,631 320 365 g,
638 340 370 r,645 340 370 g,652 345 370 g,660 360 395 g,667 365 450 g,674 430 500 g,681 445 490 r,690 455 540 g,697 485 530 g,
705 490 530 g,711 520 545 r,719 540 605 r,726 575 610 g,734 590 620 g,741 600 630 g,748 610 665 g,755 625 663 g,763 640 660 g,
770 600 655 r,777 565 640 r,785 518 600 r,792 530 605 g,799 585 620 g,806 590 625 r,814 600 620 g,821 600 635 g,828 605 635 g,
836 605 635 r,843 605 630 g,851 590 630 r,858 588 620 r,865 635 680 g,872 645 675 g,880 655 678 g,887 640 675 r,894 450 650 r,
901 320 540 r,908 298 450 g,916 380 475 g,923 440 490 g,931 480 500 g,938 470 520 r,945 402 510 g,952 460 545 g,960 490 530 g,
967 480 520 g,974 490 545 g,982 440 530 r,989 510 565 r,996 520 570 r,1003 500 570 r,1010 520 565 g,1018 515 560 r,1025 520 565 r,
1032 525 565 r,1040 510 565 r,1047 500 575 r,1054 458 540 g,1062 450 530 r,1069 470 530 g,1076 430 500 g,1084 470 520 g,
1091 500 545 g,1098 530 580 g,1105 530 582 r,1113 415 560 r,1120 480 515 g,1127 460 520 r,1135 450 510 r,1142 122 500 r,
1149 25 285 g,1157 30 250 r,1164 155 260 r,1171 180 255 g,1179 85 230 r,1186 155 275 g,1193 235 310 g,1200 240 325 r,
1208 270 355 r,1215 220 350 r,1222 142 250 r,1230 185 245 g,1237 180 265 g,1244 200 290 g,1252 260 305 r,1259 215 300 r,
1267 100 230 r,1274 -108 130 r,1281 -280 50 r,1289 -411 -203 g,1296 -233 -115 g,1303 -225 -107 g,1311 -372 -137 r,
1318 -500 -137 r,1325 -560 -348 r,1333 -625 -555 r`;

// long shadows drawn thinner than the bodies: x, top, bottom, direction
const wicks = `433 -173 355 r,456 -653 -150 r,463 -395 145 g,448 -452 -47 r,901 240 540 r,938 445 570 r,982 440 530 r,
1281 -296 50 r,1325 -593 -348 r,1333 -667 -555 r`;

const volumes = `553r 553r 555r 538r 555g 560g 562g 557g 556g 556g 555g 547r 555g 555r 550r 550g 532g 545g 515r 530r 535r 515r
528g 548g 555g 557g 558g 555g 550r 537r 550r 550g 553g 552g 545r 540r 540r 478r 497g 535r 540g 550g 545r 555g 557g 555g 557g
545r 530r 518r 530r 495r 470r 525r 530r 487r 485g 330r 125r 250g 362g 465g 385r 385g 462r 515g 515r 465r 480g 540g 540g 518r
518r 510r 520g 465r 490r 520g 545g 525g 540r 538r 540g 540r 542g 540g 541g 543g 542g 545r 542r 550g 548g 547g 550r 553g 555g
560g 557g 552g 550r 555g 552g 505r 538r 542g 548r 555g 555g 556g 556r 550r 545r 540g 538r 552g 552r 540r 220r 200r 460g 492g
520g 520r 495r 425g 512g 515g 535r 512g 470r 510r 525r 530r 520g 535r 525r 520r 515r 485r 463g 500r 480g 490g 505g 530g 540g
520r 283r 500g 495r 445r 180r 160g 237r 400r 430g 350r 485g 485r 505r 505r 500r 480r 505r 520g 515g 528r 525r 510r 328r 398r
440g 510g 505g 480r 450r 510r 552r`.split(/\s+/);

function bar(x, top, bottom, width, dir) {
  return `<rect x="${x - width / 2}" y="${top}" width="${width}" height="${bottom - top}" fill="${dir === 'r' ? RED : GREEN}"/>`;
}

function drawSticks(list, width) {
  return list.split(',').map(item => {
    const [x, top, bottom, dir] = item.trim().split(' ');
    return bar(+x, +top, +bottom, width, dir);
  }).join('');
}

document.getElementById('candles').innerHTML = drawSticks(wicks, 6) + drawSticks(candles, 7.5);

const step = 1302 / (volumes.length - 1);
document.getElementById('bars').innerHTML = volumes.map((v, i) =>
  bar(32 + i * step, parseInt(v), 568, v.endsWith('r') ? 7.5 : 5.5, v.slice(-1))
).join('');

// signal letters and the arrows under them
const letters = [103, 198, 277, 375, 447, 541, 630, 725, 807, 900, 980, 1068, 1149, 1244];
const arrows = [68, 157, 245, 340, 413, 508, 597, 691, 771, 866, 947, 1034, 1116, 1210];
document.getElementById('signals').innerHTML =
  letters.map(x => `<text x="${x}" y="783">q</text>`).join('') +
  arrows.map(x => `<path d="M${x + 72} 821H${x + 2}M${x + 20} 809l-18 12 18 12"/>`).join('');
```
